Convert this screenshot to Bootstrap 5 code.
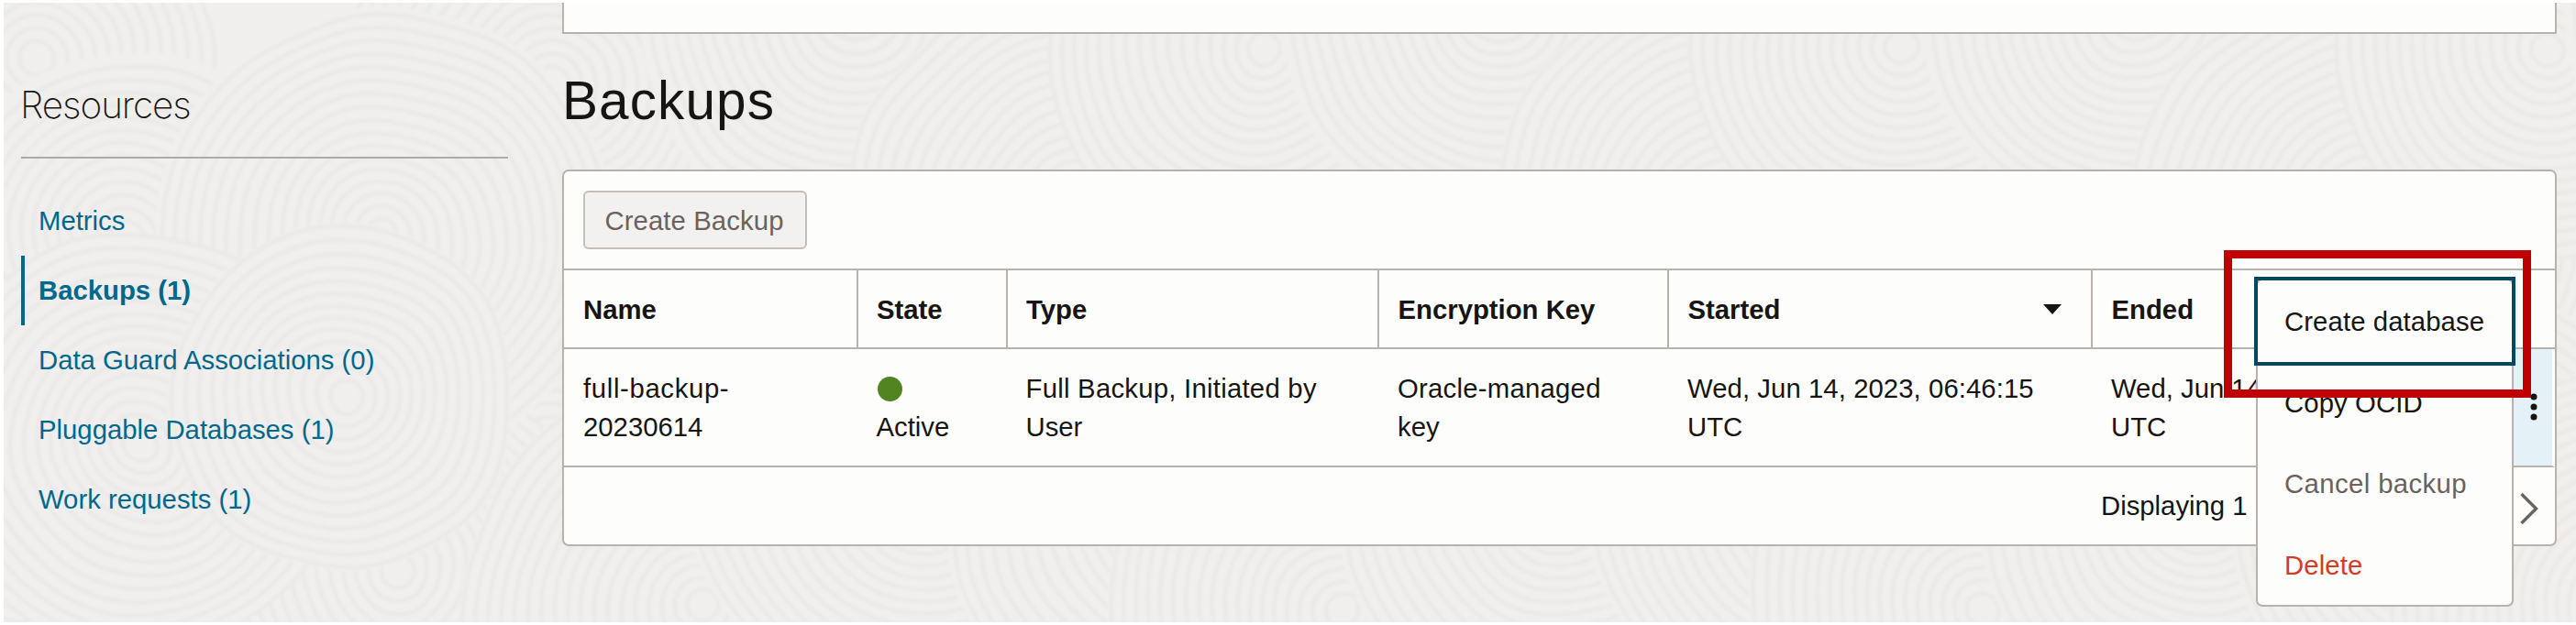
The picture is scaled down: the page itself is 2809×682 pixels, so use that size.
<!DOCTYPE html>
<html lang="en">
<head>
<meta charset="utf-8">
<title>Backups</title>
<link href="https://cdn.jsdelivr.net/npm/bootstrap@5.3.0/dist/css/bootstrap.min.css" rel="stylesheet">
<style>
  :root { --line:#b9b1ad; --ink:#161513; --teal:#00688c; --paper:#fdfdfb; }
  body { width:2809px; height:682px; overflow:hidden; background:#fff; padding:3px 0 3px 4px;
    font-family:"Liberation Sans",Arial,sans-serif; font-size:29.3px; line-height:42px; color:var(--ink); }
  .shell { height:676px; background:#f0efed; overflow:hidden; }
  .ripples { position:absolute; inset:0; width:100%; height:100%; }
  .side { width:531px; margin-left:19px; position:relative; }
  .side h2 { font-family:Inter,"Liberation Sans",sans-serif; font-weight:200; font-size:40.5px; line-height:50px; letter-spacing:-1.05px; margin:0; padding:87px 0 31px; text-indent:-1px; border-bottom:2px solid #b1aaa4; }
  .side .nav { margin-top:30px; }
  .side .nav-link { height:76px; padding:17px 0 17px 15px; border-left:4px solid transparent; color:var(--teal); }
  .side .nav-link.active { border-color:var(--teal); font-weight:700; }
  .main { width:2175px; margin-left:59px; position:relative; }
  .prior { height:34px; background:var(--paper); border:2px solid var(--line); border-top:0; }
  .main h1 { font-size:58.5px; line-height:66px; font-weight:400; letter-spacing:1.1px; margin:0; height:148px; padding-top:40px; }
  .panel { background:var(--paper); border:2px solid var(--line); border-radius:7px; height:411px; }
  .tools { height:106px; padding:21px; }
  .btn-make, .btn-make:disabled { width:244px; height:64px; padding:0 2px 0 0; font-size:29.3px; line-height:61px; letter-spacing:.1px; border:2px solid #c4bdb9; border-radius:6px; background:#f3f1f0; color:#6b625d; opacity:1; }
  .grid { table-layout:fixed; border-collapse:separate; border-spacing:0; width:100%; }
  .grid th { height:88px; border-top:2px solid var(--line); border-bottom:2px solid var(--line); border-right:2px solid var(--line); padding:1px 0 0 20.5px; }
  .grid th:nth-last-child(-n+2) { border-right:0; }
  .grid td { height:128.5px; padding:22px 0 0 20px; vertical-align:top; border-bottom:2px solid var(--line); white-space:nowrap; }
  .grid th:first-child, .grid td:first-child { padding-left:21px; }
  .name-text { letter-spacing:.65px; }
  .type-text { letter-spacing:.25px; }
  .date-text { letter-spacing:.07px; }
  .dot { width:27px; height:27px; border-radius:50%; background:#4f8420; margin:8px 0 7px 1px; display:block; }
  .grid td.more { background:#e4f1f6; background-clip:padding-box; border-right:3px solid var(--paper); padding:47px 0 0 15px; }
  .pager { height:84px; padding:0 18px 0 1676px; }
  .menu { position:absolute; left:1847px; top:301px; width:281px; height:358px; border:2px solid var(--line); border-radius:7px; background:var(--paper); }
  .menu .dropdown-item { height:88.5px; padding:24px 0 0 29px; line-height:42px; color:var(--ink); letter-spacing:.1px; }
  .menu .dropdown-item:first-child { position:relative; outline:4px solid #04485f; outline-offset:0; }
  .menu .item-off { color:#6b625d; letter-spacing:.4px; }
  .menu .item-delete { color:#d63b25; }
  .callout { position:absolute; left:1812px; top:270px; width:335px; height:161px; border:9px solid #c00000; }
</style>
<script src="https://cdn.jsdelivr.net/npm/bootstrap@5.3.0/dist/js/bootstrap.bundle.min.js"></script>
</head>
<body>
<div class="shell d-flex align-items-start position-relative">
  <svg class="ripples" aria-hidden="true">
    <filter id="wobble" x="0" y="0" width="100%" height="100%"><feTurbulence type="fractalNoise" baseFrequency=".008" numOctaves="1" seed="4"/><feDisplacementMap in="SourceGraphic" scale="22" xChannelSelector="R" yChannelSelector="G"/><feGaussianBlur stdDeviation="1"/></filter>
    <rect width="100%" height="100%" fill="#f0efed"/>
    <g id="ripples" filter="url(#wobble)"></g>
  </svg>
  <aside class="side flex-shrink-0">
    <h2>Resources</h2>
    <nav class="nav flex-column flex-nowrap">
      <a class="nav-link">Metrics</a>
      <a class="nav-link active">Backups (1)</a>
      <a class="nav-link">Data Guard Associations (0)</a>
      <a class="nav-link">Pluggable Databases (1)</a>
      <a class="nav-link">Work requests (1)</a>
    </nav>
  </aside>
  <main class="main flex-shrink-0">
    <div class="prior"></div>
    <h1>Backups</h1>
    <section class="panel">
      <div class="tools"><button class="btn btn-make" disabled>Create Backup</button></div>
      <table class="grid">
        <colgroup><col style="width:320.5px"><col style="width:163px"><col style="width:405.5px"><col style="width:316px"><col style="width:462px"><col><col style="width:48px"></colgroup>
        <thead><tr>
          <th>Name</th><th>State</th><th>Type</th><th>Encryption Key</th>
          <th><div class="d-flex justify-content-between align-items-center"><span>Started</span><svg width="20" height="11" style="margin-right:32px"><path d="M0 0h20L10 11z" fill="#161513"/></svg></div></th>
          <th>Ended</th><th></th>
        </tr></thead>
        <tbody><tr>
          <td><span class="name-text">full-backup-</span><br>20230614</td>
          <td><span class="dot"></span>Active</td>
          <td><span class="type-text">Full Backup, Initiated by</span><br>User</td>
          <td><span class="type-text">Oracle-managed</span><br>key</td>
          <td><span class="date-text">Wed, Jun 14, 2023, 06:46:15</span><br>UTC</td>
          <td>Wed, Jun 14,<br>UTC</td>
          <td class="more"><svg class="d-block" width="20" height="32" fill="#161513"><circle cx="10" cy="5" r="3.5"/><circle cx="10" cy="16" r="3.5"/><circle cx="10" cy="27" r="3.5"/></svg></td>
        </tr></tbody>
      </table>
      <div class="pager d-flex justify-content-between align-items-center">
        <span>Displaying 1</span>
        <svg width="20" height="34" style="margin-top:6px" fill="none" stroke="#6b625d" stroke-width="3.4"><path d="M1.5 1l16 16-16 16"/></svg>
      </div>
    </section>
    <div class="menu">
      <a class="dropdown-item">Create database</a>
      <a class="dropdown-item">Copy OCID</a>
      <a class="dropdown-item item-off">Cancel backup</a>
      <a class="dropdown-item item-delete">Delete</a>
    </div>
    <div class="callout"></div>
  </main>
</div>
<script>
  // Overlapping ring clusters: each disc covers part of the previous ones.
  const seeds = [[40,60,190],[600,90,240],[290,690,260],[600,480,280],[20,600,240],[430,620,230],[135,255,200],[415,255,250],[150,480,230],[370,430,190]];
  const tile = [[0,660,260],[170,10,240],[420,230,260],[610,50,230],[240,540,250],[520,560,250]];
  for (let x = 760; x < 2900; x += 700) tile.forEach(t => seeds.push([t[0] + x, t[1], t[2]]));
  let out = '';
  for (const [x, y, r] of seeds) {
    out += `<circle cx="${x}" cy="${y}" r="${r}" fill="#f0efed"/>`;
    for (let k = 18; k < r; k += 14) out += `<ellipse cx="${x}" cy="${y}" rx="${k}" ry="${k}" fill="none" stroke="#ebeae8" stroke-width="5"/>`;
  }
  document.getElementById('ripples').innerHTML = out;
</script>
</body>
</html>
